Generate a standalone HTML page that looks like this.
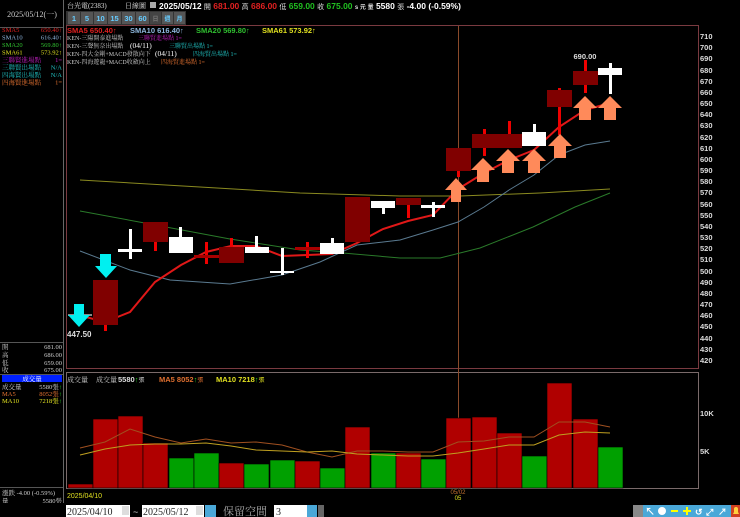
<!DOCTYPE html>
<html><head><meta charset="utf-8"><style>
body{margin:0;background:#000;width:740px;height:517px;overflow:hidden;font-family:"Liberation Sans","Noto Sans CJK TC",sans-serif}
svg{display:block}
</style></head><body>
<svg width="740" height="517" viewBox="0 0 740 517" xmlns="http://www.w3.org/2000/svg" font-family="Liberation Sans, Noto Sans CJK TC, sans-serif">
<rect width="740" height="517" fill="#000"/>
<!-- left panel -->
<line x1="63.5" y1="0" x2="63.5" y2="503" stroke="#666"/>
<line x1="0" y1="27.5" x2="63" y2="27.5" stroke="#555"/>
<text x="32" y="17" fill="#ccc" font-size="8" text-anchor="middle" font-family="Liberation Serif, Noto Serif CJK SC, serif">2025/05/12(一)</text>
<g font-size="6.5" font-family="Liberation Serif, Noto Serif CJK SC, serif">
<text x="2" y="32" fill="#e02020">SMA5</text><text x="62" y="32" fill="#e02020" text-anchor="end">650.40↑</text>
<text x="2" y="39.5" fill="#8fb8e0">SMA10</text><text x="62" y="39.5" fill="#8fb8e0" text-anchor="end">616.40↑</text>
<text x="2" y="47" fill="#30c030">SMA20</text><text x="62" y="47" fill="#30c030" text-anchor="end">569.80↑</text>
<text x="2" y="54.5" fill="#e0e020">SMA61</text><text x="62" y="54.5" fill="#e0e020" text-anchor="end">573.92↑</text>
<text x="2" y="62" fill="#c020c0">三聯賢進場點</text><text x="62" y="62" fill="#c020c0" text-anchor="end">1=</text>
<text x="2" y="69.5" fill="#20c0c0">三聯賢出場點</text><text x="62" y="69.5" fill="#20c0c0" text-anchor="end">N/A</text>
<text x="2" y="77" fill="#20c0c0">四海賢出場點</text><text x="62" y="77" fill="#20c0c0" text-anchor="end">N/A</text>
<text x="2" y="84.5" fill="#e07030">四海賢進場點</text><text x="62" y="84.5" fill="#e07030" text-anchor="end">1=</text>
</g>
<line x1="0" y1="342.5" x2="63" y2="342.5" stroke="#555"/>
<g font-size="6.5" fill="#ccc" font-family="Liberation Serif, Noto Serif CJK SC, serif">
<text x="2" y="349">開</text><text x="62" y="349" text-anchor="end">681.00</text>
<text x="2" y="357">高</text><text x="62" y="357" text-anchor="end">686.00</text>
<text x="2" y="365">低</text><text x="62" y="365" text-anchor="end">659.00</text>
<text x="2" y="372">收</text><text x="62" y="372" text-anchor="end">675.00</text>
</g>
<line x1="0" y1="374.5" x2="63" y2="374.5" stroke="#555"/>
<rect x="2" y="375" width="60" height="7" fill="#0020ff"/>
<g font-size="6.5" font-family="Liberation Serif, Noto Serif CJK SC, serif">
<text x="32" y="381" fill="#fff" text-anchor="middle">成交量</text>
<text x="2" y="389" fill="#ccc">成交量</text><text x="62" y="389" fill="#ccc" text-anchor="end">5580張<tspan fill="#2c2">↑</tspan></text>
<text x="2" y="396" fill="#e07030">MA5</text><text x="62" y="396" fill="#e07030" text-anchor="end">8052張<tspan fill="#2c2">↑</tspan></text>
<text x="2" y="403" fill="#e0e020">MA10</text><text x="62" y="403" fill="#e0e020" text-anchor="end">7218張<tspan fill="#2c2">↑</tspan></text>
</g>
<line x1="0" y1="487.5" x2="63" y2="487.5" stroke="#555"/>
<g font-size="6.5" fill="#ccc" font-family="Liberation Serif, Noto Serif CJK SC, serif">
<text x="2" y="495">漲跌 -4.00 (-0.59%)</text>
<text x="2" y="503">量</text><text x="62" y="503" text-anchor="end">5580張</text>
</g>
<!-- header -->
<text x="67" y="8" font-size="7" fill="#ddd" font-family="Liberation Serif, Noto Serif CJK SC, serif">台光電(2383)</text>
<text x="125" y="8" font-size="7" fill="#ddd" font-family="Liberation Serif, Noto Serif CJK SC, serif">日線圖</text>
<rect x="150" y="2" width="6" height="6" fill="#aaa"/>
<text x="159" y="9" font-size="8.5" font-weight="bold" fill="#fff">2025/05/12 <tspan fill="#ddd" font-weight="normal" font-size="7">開</tspan> <tspan fill="#e02020">681.00</tspan> <tspan fill="#ddd" font-weight="normal" font-size="7">高</tspan> <tspan fill="#e02020">686.00</tspan> <tspan fill="#ddd" font-weight="normal" font-size="7">低</tspan> <tspan fill="#20c020">659.00</tspan> <tspan fill="#ddd" font-weight="normal" font-size="7">收</tspan> <tspan fill="#20c020">675.00</tspan> <tspan fill="#ddd" font-size="6">s 元  量</tspan> 5580 <tspan fill="#ddd" font-weight="normal" font-size="7">張</tspan>  -4.00 (-0.59%)</text>
<rect x="66" y="11" width="120" height="14" fill="#333"/>
<g font-size="7.5" fill="#6cf" font-weight="bold">
<rect x="68" y="12" width="12" height="12" fill="#555"/><text x="74" y="21" text-anchor="middle">1</text>
<rect x="81" y="12" width="12" height="12" fill="#555"/><text x="87" y="21" text-anchor="middle">5</text>
<rect x="94" y="12" width="13" height="12" fill="#555"/><text x="100.5" y="21" text-anchor="middle">10</text>
<rect x="108" y="12" width="13" height="12" fill="#555"/><text x="114.5" y="21" text-anchor="middle">15</text>
<rect x="122" y="12" width="13" height="12" fill="#555"/><text x="128.5" y="21" text-anchor="middle">30</text>
<rect x="136" y="12" width="13" height="12" fill="#555"/><text x="142.5" y="21" text-anchor="middle">60</text>
<rect x="150" y="12" width="11" height="12" fill="#444"/><text x="155.5" y="21" text-anchor="middle" fill="#777" font-size="6">日</text>
<rect x="162" y="12" width="11" height="12" fill="#555"/><text x="167.5" y="21" text-anchor="middle" font-size="6">週</text>
<rect x="174" y="12" width="11" height="12" fill="#555"/><text x="179.5" y="21" text-anchor="middle" font-size="6">月</text>
</g>
<!-- main chart frame -->
<rect x="66.5" y="25.5" width="632" height="343" fill="none" stroke="#7a3a40"/>
<rect x="66.5" y="372.5" width="632" height="116" fill="none" stroke="#7a6a6a"/>
<line x1="458.5" y1="26" x2="458.5" y2="489" stroke="#8a4a2a"/>
<!-- legends -->
<g font-size="7.5" font-weight="bold">
<text x="67" y="33" fill="#e02020">SMA5 650.40↑</text>
<text x="130" y="33" fill="#8fb8e0">SMA10 616.40↑</text>
<text x="196" y="33" fill="#30c030">SMA20 569.80↑</text>
<text x="262" y="33" fill="#e0e020">SMA61 573.92↑</text>
</g>
<g font-size="6" font-family="Liberation Serif, Noto Serif CJK SC, serif">
<text x="67" y="40" fill="#ccc">KEN-三陽開泰進場點</text><text x="138" y="40" fill="#c020c0">三聯賢進場點 1=</text>
<text x="67" y="48" fill="#ccc">KEN-三聲無奈出場點</text><text x="130" y="48" fill="#fff" font-size="7.5">(04/11)</text><text x="169" y="48" fill="#20c0c0">三聯賢出場點 1=</text>
<text x="67" y="56" fill="#ccc">KEN-四大金剛+MACD發散向下</text><text x="155" y="56" fill="#fff" font-size="7.5">(04/11)</text><text x="193" y="56" fill="#20c0c0">四海賢出場點 1=</text>
<text x="67" y="64" fill="#ccc">KEN-四海遊龍+MACD收斂向上</text><text x="161" y="64" fill="#e07030">四海賢進場點 1=</text>
</g>
<!-- y axis -->
<g font-size="7.5" font-weight="bold" fill="#ddd">
<text x="700" y="39">710</text><text x="700" y="50">700</text><text x="700" y="61">690</text><text x="700" y="73">680</text>
<text x="700" y="84">670</text><text x="700" y="95">660</text><text x="700" y="106">650</text><text x="700" y="117">640</text>
<text x="700" y="128">630</text><text x="700" y="140">620</text><text x="700" y="151">610</text><text x="700" y="162">600</text>
<text x="700" y="173">590</text><text x="700" y="184">580</text><text x="700" y="195">570</text><text x="700" y="207">560</text>
<text x="700" y="218">550</text><text x="700" y="229">540</text><text x="700" y="240">530</text><text x="700" y="251">520</text>
<text x="700" y="262">510</text><text x="700" y="274">500</text><text x="700" y="285">490</text><text x="700" y="296">480</text>
<text x="700" y="307">470</text><text x="700" y="318">460</text><text x="700" y="329">450</text><text x="700" y="341">440</text>
<text x="700" y="352">430</text><text x="700" y="363">420</text>
<text x="700" y="416">10K</text><text x="700" y="454">5K</text>
</g>
<!-- MA lines -->
<polyline fill="none" stroke="#8a8a20" stroke-width="1" points="80,180 200,187 300,193 400,196 460,196 540,193 610,189"/>
<polyline fill="none" stroke="#2a7a2a" stroke-width="1" points="80,211 150,224 230,239 300,250 343,253 400,258 440,258 480,248 533,227 575,207 610,193"/>
<polyline fill="none" stroke="#5a7a90" stroke-width="1" points="80,251 130,270 170,280 230,284 282,275 320,262 357,245 400,240 433,230 458,222 484,207 509,190 534,175 559,155 585,145 610,141"/>
<polyline fill="none" stroke="#e01818" stroke-width="2" points="78,315 105,322 130,312 155,282 181,265 206,252 231,246 256,246 282,256 307,255 332,254 357,243 383,229 408,221 433,215 458,189 484,173 509,160 534,150 559,127 585,110 610,103"/>
<!-- candles -->
<g fill="#800000">
<rect x="104" y="325" width="3" height="6" fill="#e00"/>
<rect x="93" y="280" width="25" height="45"/>
<rect x="154" y="242" width="3" height="9" fill="#e00"/><rect x="143" y="222" width="25" height="20"/>
<rect x="205" y="242" width="3" height="22" fill="#e00"/><rect x="194" y="255" width="25" height="3" fill="#a00"/>
<rect x="230" y="238" width="3" height="10" fill="#e00"/><rect x="219" y="247" width="25" height="16"/>
<rect x="306" y="242" width="3" height="16" fill="#e00"/><rect x="295" y="247" width="25" height="3" fill="#a00"/>
<rect x="345" y="197" width="25" height="45"/>
<rect x="407" y="199" width="3" height="19" fill="#e00"/><rect x="396" y="198" width="25" height="7"/>
<rect x="457" y="168" width="3" height="9" fill="#e00"/><rect x="446" y="148" width="25" height="23"/>
<rect x="483" y="129" width="3" height="27" fill="#e00"/><rect x="472" y="134" width="25" height="14"/>
<rect x="508" y="121" width="3" height="27" fill="#e00"/><rect x="497" y="134" width="25" height="14"/>
<rect x="558" y="88" width="3" height="47" fill="#e00"/><rect x="547" y="90" width="25" height="17"/>
<rect x="584" y="60" width="3" height="33" fill="#e00"/><rect x="573" y="71" width="25" height="14"/>
</g>
<g fill="#fff">
<rect x="68" y="314" width="24" height="2" fill="#888"/>
<rect x="129" y="229" width="3" height="30"/><rect x="118" y="249" width="24" height="3"/>
<rect x="179" y="227" width="3" height="12"/><rect x="169" y="237" width="24" height="16"/>
<rect x="255" y="236" width="3" height="12"/><rect x="245" y="247" width="24" height="6"/>
<rect x="281" y="248" width="3" height="27"/><rect x="270" y="271" width="24" height="2"/>
<rect x="331" y="238" width="3" height="7"/><rect x="320" y="243" width="24" height="11"/>
<rect x="382" y="201" width="3" height="13"/><rect x="371" y="201" width="24" height="7"/>
<rect x="432" y="202" width="3" height="15"/><rect x="421" y="205" width="24" height="3"/>
<rect x="533" y="124" width="3" height="10"/><rect x="522" y="132" width="24" height="14"/>
<rect x="609" y="63" width="3" height="31"/><rect x="598" y="68" width="24" height="7"/>
</g>
<text x="67" y="337" font-size="8" font-weight="bold" fill="#ddd">447.50</text>
<text x="585" y="59" font-size="7.5" font-weight="bold" fill="#ddd" text-anchor="middle">690.00</text>
<!-- arrows -->
<g fill="#00f0f0">
<polygon points="74,304 84,304 84,315 90,315 79,327 68,315 74,315"/>
<polygon points="100,254 111,254 111,266 117,266 106,278 95,266 100,266"/>
</g>
<g fill="#ff8a5a">
<polygon points="456,178 467,190 461,190 461,202 451,202 451,190 445,190"/>
<polygon points="483,158 495,170 489,170 489,182 477,182 477,170 471,170"/>
<polygon points="508,149 520,161 514,161 514,173 502,173 502,161 496,161"/>
<polygon points="534,149 546,161 540,161 540,173 528,173 528,161 522,161"/>
<polygon points="560,134 572,146 566,146 566,158 554,158 554,146 548,146"/>
<polygon points="585,96 597,108 591,108 591,120 579,120 579,108 573,108"/>
<polygon points="610,96 622,108 616,108 616,120 604,120 604,108 598,108"/>
</g>
<!-- volume legend -->
<g font-size="7" font-family="Liberation Serif, Noto Serif CJK SC, serif">
<text x="67" y="382" fill="#ccc">成交量</text><text x="96" y="382" fill="#ccc">成交量</text>
</g>
<g font-size="7.5" font-weight="bold">
<text x="118" y="382" fill="#ddd">5580<tspan fill="#2c2">↑</tspan><tspan fill="#ccc" font-weight="normal" font-size="6">張</tspan></text>
<text x="159" y="382" fill="#e07030">MA5 8052<tspan fill="#2c2">↑</tspan><tspan font-weight="normal" font-size="6">張</tspan></text>
<text x="216" y="382" fill="#e0e020">MA10 7218<tspan fill="#2c2">↑</tspan><tspan font-weight="normal" font-size="6">張</tspan></text>
</g>
<!-- volume bars -->
<g stroke="#000" stroke-width="0.6">
<rect x="68" y="484" width="25" height="4" fill="#b00000"/>
<rect x="93" y="419" width="25" height="69" fill="#b00000"/>
<rect x="118" y="416" width="25" height="72" fill="#b00000"/>
<rect x="143" y="443" width="25" height="45" fill="#b00000"/>
<rect x="169" y="458" width="25" height="30" fill="#00a000"/>
<rect x="194" y="453" width="25" height="35" fill="#00a000"/>
<rect x="219" y="463" width="25" height="25" fill="#b00000"/>
<rect x="244" y="464" width="25" height="24" fill="#00a000"/>
<rect x="270" y="460" width="25" height="28" fill="#00a000"/>
<rect x="295" y="461" width="25" height="27" fill="#b00000"/>
<rect x="320" y="468" width="25" height="20" fill="#00a000"/>
<rect x="345" y="427" width="25" height="61" fill="#b00000"/>
<rect x="371" y="453" width="25" height="35" fill="#00a000"/>
<rect x="396" y="453" width="25" height="35" fill="#b00000"/>
<rect x="421" y="459" width="25" height="29" fill="#00a000"/>
<rect x="446" y="418" width="25" height="70" fill="#b00000"/>
<rect x="472" y="417" width="25" height="71" fill="#b00000"/>
<rect x="497" y="433" width="25" height="55" fill="#b00000"/>
<rect x="522" y="456" width="25" height="32" fill="#00a000"/>
<rect x="547" y="383" width="25" height="105" fill="#b00000"/>
<rect x="573" y="419" width="25" height="69" fill="#b00000"/>
<rect x="598" y="447" width="25" height="41" fill="#00a000"/>
</g>
<polyline fill="none" stroke="#a05020" stroke-width="1" points="80,448 105,442 130,429 155,437 181,443 206,439 231,443 256,442 282,445 307,452 332,457 357,451 383,451 408,452 433,452 458,442 484,441 509,437 534,437 559,422 585,422 610,427"/>
<polyline fill="none" stroke="#c0a020" stroke-width="1" points="80,455 105,449 130,445 155,444 181,444 206,443 231,446 256,450 282,451 307,452 332,451 357,454 383,455 408,456 433,456 458,453 484,449 509,445 534,445 559,435 585,432 610,433"/>
<text x="67" y="498" font-size="7" fill="#e0e020">2025/04/10</text>
<text x="458" y="494" font-size="6" fill="#c07030" text-anchor="middle">05/02</text>
<text x="458" y="500" font-size="6" fill="#e0e020" text-anchor="middle">05</text>
<!-- bottom bar -->
<rect x="0" y="503" width="740" height="14" fill="#000"/>
<rect x="66" y="505" width="64" height="12" fill="#fff"/>
<text x="67" y="515" font-size="10" fill="#222" font-family="Liberation Serif, serif">2025/04/10</text>
<rect x="122" y="506" width="7" height="9" fill="#ddd"/>
<text x="133" y="515" font-size="9" fill="#ccc">~</text>
<rect x="142" y="505" width="62" height="12" fill="#fff"/>
<text x="143" y="515" font-size="10" fill="#222" font-family="Liberation Serif, serif">2025/05/12</text>
<rect x="196" y="506" width="7" height="9" fill="#ddd"/>
<rect x="205" y="505" width="11" height="12" fill="#4aa8d8"/>
<text x="223" y="515" font-size="11" fill="#aaa" font-family="Noto Serif CJK SC, serif">保留空間</text>
<rect x="274" y="505" width="33" height="12" fill="#fff"/>
<text x="276" y="515" font-size="10" fill="#222" font-family="Liberation Serif, serif">3</text>
<rect x="307" y="505" width="10" height="12" fill="#4aa8d8"/>
<rect x="318" y="505" width="6" height="12" fill="#666"/>
<rect x="633" y="505" width="10" height="12" fill="#888"/>
<rect x="643" y="505" width="88" height="12" fill="#4aa8d8"/>
<g fill="#fff" font-size="10" font-weight="bold">
<text x="645" y="515">↖</text><circle cx="662" cy="511" r="4"/>
<rect x="671" y="510" width="7" height="2" fill="#ff0"/>
<rect x="683" y="510" width="8" height="2" fill="#ff0"/><rect x="686" y="507" width="2" height="8" fill="#ff0"/>
<text x="695" y="515" font-size="9">↺</text><text x="706" y="515" font-size="9">⤢</text><text x="718" y="515" font-size="9">↗</text>
</g>
<rect x="731" y="505" width="9" height="12" fill="#d04020"/>
<path d="M733 514 h6 l-1 -2 v-3 a2 2 0 0 0 -4 0 v3 z" fill="#ffd040"/>
</svg>
</body></html>
